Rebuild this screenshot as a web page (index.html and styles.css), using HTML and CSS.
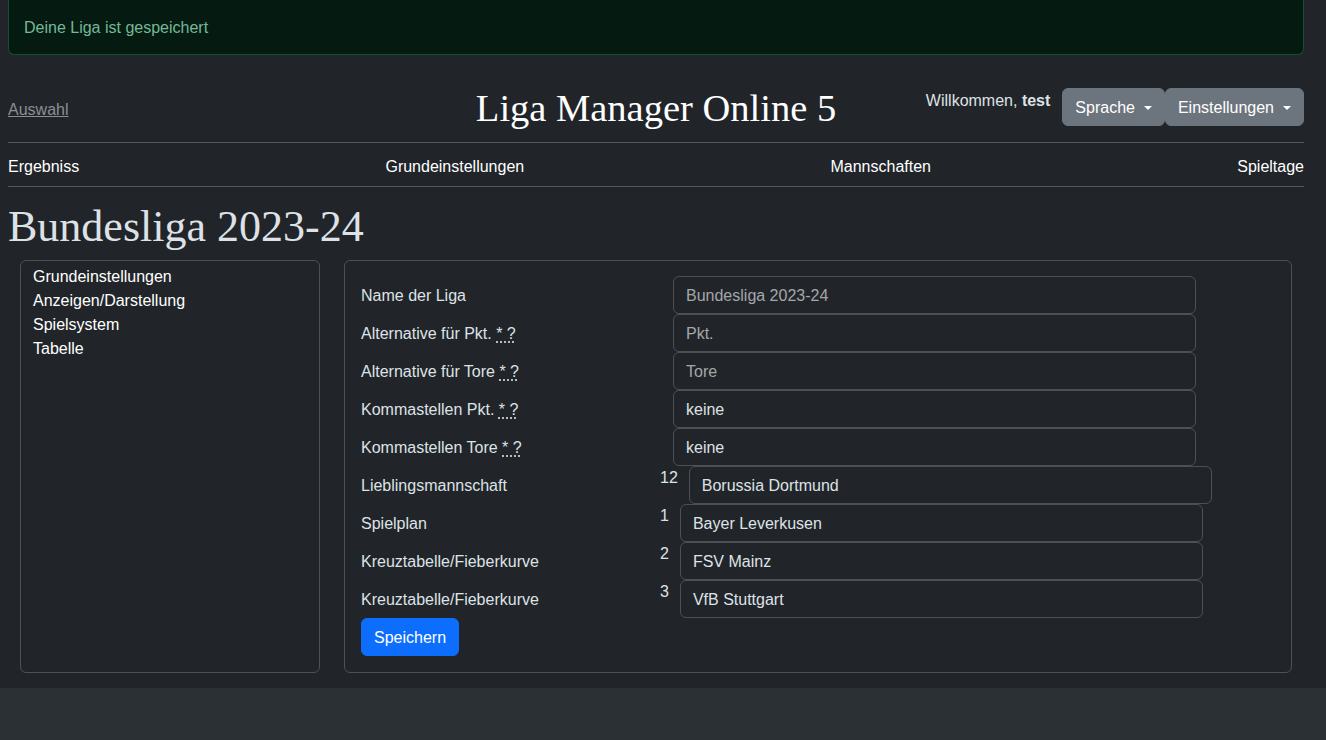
FILE: index.html
```html
<!DOCTYPE html>
<html lang="de">
<head>
<meta charset="utf-8">
<title>Liga Manager Online 5</title>
<link rel="stylesheet" href="styles.css">
</head>
<body>
<div class="page">
  <div class="alert">Deine Liga ist gespeichert</div>
  <header class="top">
    <div class="top-left"><a class="back" href="#">Auswahl</a></div>
    <div class="brand">Liga Manager Online 5</div>
    <div class="top-right">
      <span class="welcome">Willkommen, <b>test</b></span>
      <div class="btns">
        <button class="btn-sec">Sprache<span class="caret"></span></button>
        <button class="btn-sec">Einstellungen<span class="caret"></span></button>
      </div>
    </div>
  </header>
  <hr class="line">
  <nav class="mainnav">
    <a href="#">Ergebniss</a>
    <a href="#">Grundeinstellungen</a>
    <a href="#">Mannschaften</a>
    <a href="#">Spieltage</a>
  </nav>
  <hr class="line">
  <h1 class="league">Bundesliga 2023-24</h1>
  <div class="cards">
    <div class="card side">
      <a href="#">Grundeinstellungen</a>
      <a href="#">Anzeigen/Darstellung</a>
      <a href="#">Spielsystem</a>
      <a href="#">Tabelle</a>
    </div>
    <div class="card main">
      <div class="frow"><label class="flabel">Name der Liga</label><div class="fcol pad"><div class="input muted">Bundesliga 2023-24</div></div></div>
      <div class="frow"><label class="flabel">Alternative für Pkt. <abbr title="Hinweis">* ?</abbr></label><div class="fcol pad"><div class="input muted">Pkt.</div></div></div>
      <div class="frow"><label class="flabel">Alternative für Tore <abbr title="Hinweis">* ?</abbr></label><div class="fcol pad"><div class="input muted">Tore</div></div></div>
      <div class="frow"><label class="flabel">Kommastellen Pkt. <abbr title="Hinweis">* ?</abbr></label><div class="fcol pad"><div class="input">keine</div></div></div>
      <div class="frow"><label class="flabel">Kommastellen Tore <abbr title="Hinweis">* ?</abbr></label><div class="fcol pad"><div class="input">keine</div></div></div>
      <div class="frow"><label class="flabel">Lieblingsmannschaft</label><div class="fcol"><span class="num">12</span><div class="input">Borussia Dortmund</div></div></div>
      <div class="frow"><label class="flabel">Spielplan</label><div class="fcol"><span class="num">1</span><div class="input">Bayer Leverkusen</div></div></div>
      <div class="frow"><label class="flabel">Kreuztabelle/Fieberkurve</label><div class="fcol"><span class="num">2</span><div class="input">FSV Mainz</div></div></div>
      <div class="frow"><label class="flabel">Kreuztabelle/Fieberkurve</label><div class="fcol"><span class="num">3</span><div class="input">VfB Stuttgart</div></div></div>
      <div><button class="btn-primary">Speichern</button></div>
    </div>
  </div>
</div>
</body>
</html>
```

FILE: styles.css
```css
* { box-sizing: border-box; }
html, body { margin: 0; }
body {
  background: #2b3035;
  color: #dee2e6;
  font-family: "Liberation Sans", Arial, sans-serif;
  font-size: 16px;
  line-height: 24px;
  overflow: hidden;
}
.page {
  background: #212529;
  height: 688px;
  padding: 0 22px 0 8px;
}
.alert {
  background: #051b11;
  border: 1px solid #0f5132;
  color: #75b798;
  border-radius: 0 0 6px 6px;
  border-top: 0;
  padding: 16px 15px 14px;
  margin-bottom: 16px;
  height: 55px;
}
.top {
  display: grid;
  grid-template-columns: 1fr auto 1fr;
  align-items: start;
  height: 71px;
  padding-top: 17px;
}
.back {
  display: inline-block;
  margin-top: 10px;
  color: #8b8f94;
  text-decoration: underline;
}
.brand {
  font-family: "Liberation Serif", "Times New Roman", serif;
  font-size: 38.5px;
  line-height: 40px;
  color: #ffffff;
}
.top-right {
  display: flex;
  justify-content: flex-end;
  align-items: flex-start;
  gap: 12px;
}
.welcome { color: #dee2e6; padding-top: 1px; }
.welcome b { font-weight: bold; }
.btns { display: flex; }
.btn-sec {
  background: #6c757d;
  color: #fff;
  border: 1px solid #6c757d;
  border-radius: 6px;
  font-family: inherit;
  font-size: 16px;
  line-height: 24px;
  padding: 7px 12px 5px;
  height: 38px;
  display: flex;
  align-items: center;
}
.caret {
  display: inline-block;
  margin-left: 9px;
  width: 0;
  height: 0;
  border-top: 4.8px solid #fff;
  border-left: 4.8px solid transparent;
  border-right: 4.8px solid transparent;
  margin-top: 0;
}
.line {
  border: 0;
  border-top: 1px solid #54585c;
  margin: 0;
  height: 0;
}
.mainnav {
  display: flex;
  justify-content: space-between;
  padding: 12px 0 7px;
}
.mainnav a { color: #fff; text-decoration: none; }
.league {
  font-family: "Liberation Serif", "Times New Roman", serif;
  font-weight: normal;
  font-size: 44px;
  line-height: 52px;
  margin: 14px 0 7px;
  color: #dee2e6;
}
.cards {
  display: flex;
  gap: 24px;
  padding: 0 12px;
}
.card {
  border: 1px solid #4d5154;
  border-radius: 6px;
}
.side {
  width: 300px;
  padding: 4px 12px;
  display: flex;
  flex-direction: column;
  align-items: flex-start;
}
.side a { color: #fff; text-decoration: none; }
.main {
  flex: 1;
  padding: 15px 16px 16px;
}
.frow {
  display: flex;
  height: 38px;
}
.flabel {
  width: 300px;
  padding-top: 8px;
  color: #dee2e6;
}
abbr {
  text-decoration: underline dotted;
  text-underline-offset: 3px;
}
.fcol {
  display: flex;
  align-items: flex-start;
}
.fcol.pad { padding-left: 12px; }
.num {
  margin-right: 11px;
  margin-left: -1px;
  color: #dee2e6;
  line-height: 24px;
}
.input {
  width: 523px;
  height: 38px;
  border: 1px solid #4d5154;
  border-radius: 6px;
  padding: 7px 12px 5px;
  color: #dee2e6;
  background: #212529;
}
.input.muted { color: #a3a7ab; }
.btn-primary {
  background: #0d6efd;
  border: 1px solid #0d6efd;
  color: #fff;
  font-family: inherit;
  font-size: 16px;
  line-height: 24px;
  padding: 7px 12px 5px;
  border-radius: 6px;
  height: 38px;
}
```
